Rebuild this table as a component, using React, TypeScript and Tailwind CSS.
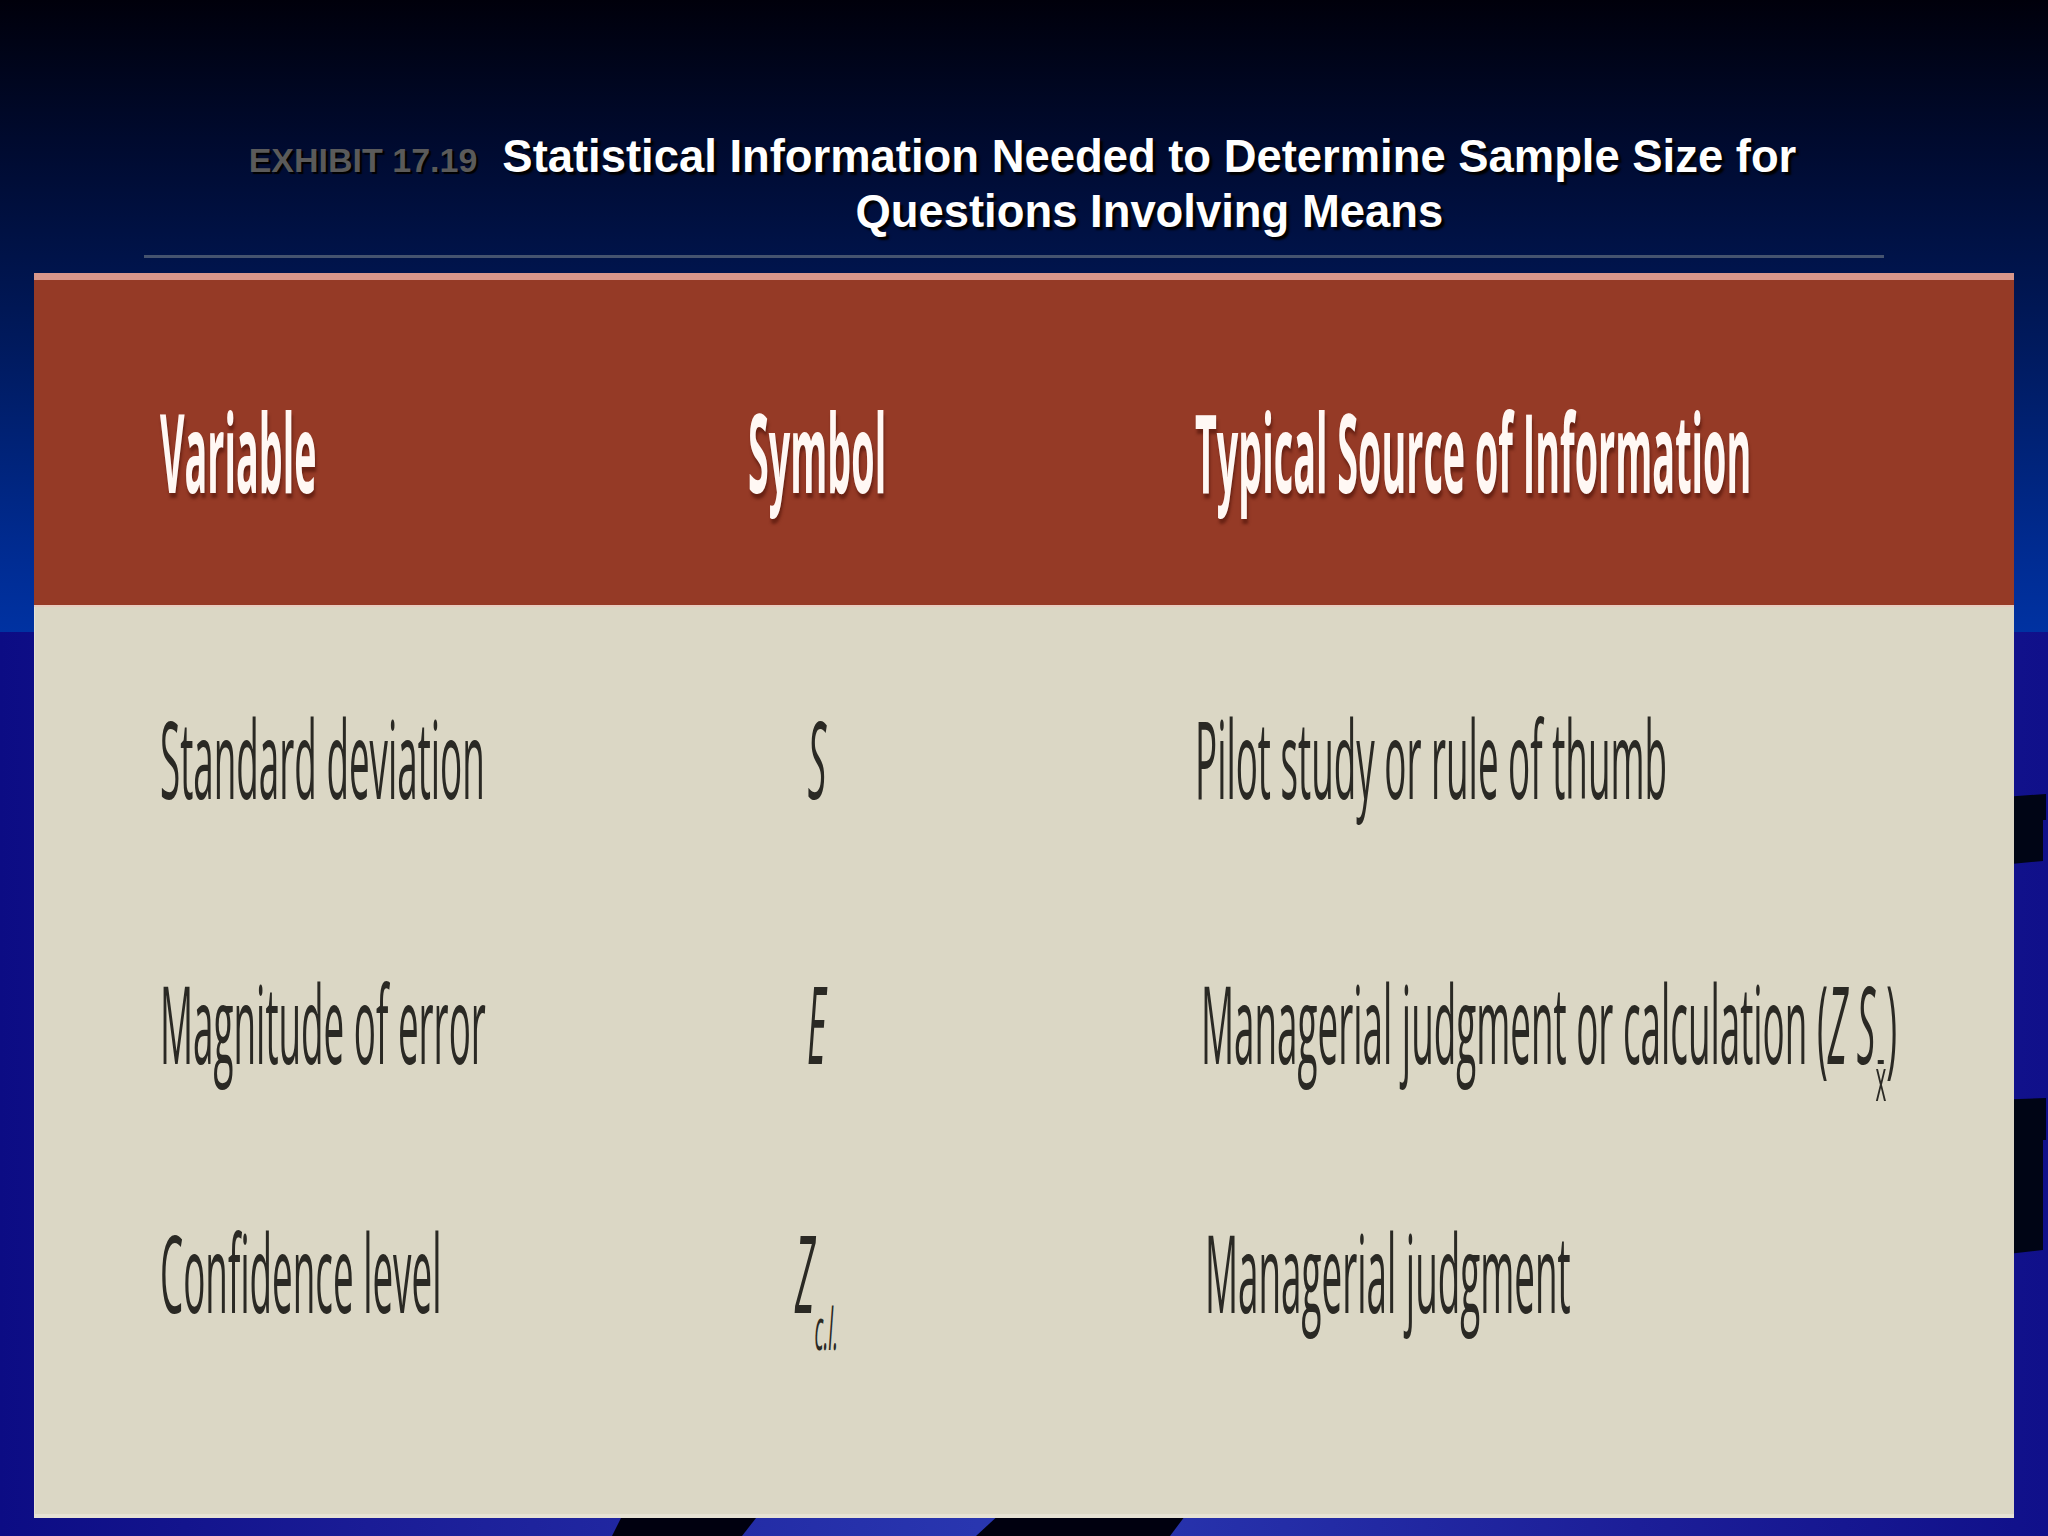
import React from "react";

// condensed, tall table lettering: a normal face squeezed on x and stretched on y
const cell = "inline-block whitespace-nowrap text-[64px] leading-none scale-x-[0.59] scale-y-[1.7]";
const bodyCell = "inline-block whitespace-nowrap text-[64px] leading-none scale-x-[0.575] scale-y-[1.7]";

function Sub({ children }: { children: React.ReactNode }) {
  return <span className="relative top-[22px] text-[34px]">{children}</span>;
}

interface Row {
  variable: string;
  symbol: React.ReactNode;
  source: React.ReactNode;
  mt: string;
  pl: string;
}

const rows: Row[] = [
  {
    variable: "Standard deviation",
    symbol: <i>S</i>,
    source: "Pilot study or rule of thumb",
    mt: "mt-[91px]",
    pl: "pl-[261px]",
  },
  {
    variable: "Magnitude of error",
    symbol: <i>E</i>,
    source: (
      <>
        Managerial judgment or calculation (<i>Z S</i>
        <span className="relative top-[22px] text-[36px]">x&#772;</span>)
      </>
    ),
    mt: "mt-[145px]",
    pl: "pl-[267px]",
  },
  {
    variable: "Confidence level",
    symbol: (
      <i>
        Z<Sub>c.l.</Sub>
      </i>
    ),
    source: "Managerial judgment",
    mt: "mt-[129px]",
    pl: "pl-[271px]",
  },
];

function Background() {
  return (
    <div className="absolute inset-0">
      <div className="h-[632px] bg-[linear-gradient(180deg,#00000b_0%,#000a2e_22%,#001a5e_55%,#002a8e_85%,#0032a2_100%)]" />
      <div className="h-[904px] bg-[linear-gradient(90deg,#0c0c84_0%,#1a1c96_18%,#2a38b2_50%,#1c1e98_80%,#10108a_100%)]" />
      <svg className="absolute inset-0" width="2048" height="1536" viewBox="0 0 2048 1536">
        <polygon points="1990,798 2046,794 2046,820 2043,820 2043,861 1990,866" fill="#000515" />
        <polygon points="1990,1100 2046,1098 2046,1140 2043,1140 2043,1250 1990,1256" fill="#000515" />
        <polygon points="630,1500 770,1500 742,1536 612,1536" fill="#00000f" />
        <polygon points="1015,1500 1197,1500 1170,1536 976,1536" fill="#00000f" />
      </svg>
    </div>
  );
}

export default function App() {
  return (
    <div className="relative w-[2048px] h-[1536px] overflow-hidden bg-[#000a2e]">
      <Background />

      <div className="relative flex flex-col">
        {/* slide title */}
        <div className="pt-[129px] flex justify-center items-baseline font-['Liberation_Sans',Arial,sans-serif] font-bold">
          <span className="text-[34px] leading-[55px] text-[#5a5a5a] [text-shadow:2px_2px_1px_#000000] mr-[22px]">
            EXHIBIT 17.19
          </span>
          <h1 className="w-[1300px] text-center text-[45.4px] leading-[55px] text-white [text-shadow:3px_3px_2px_#000000]">
            Statistical Information Needed to Determine Sample Size for
            <br />
            Questions Involving Means
          </h1>
        </div>

        <div className="mt-[16px] ml-[144px] w-[1740px] h-[3px] bg-[#45536f]" />

        {/* exhibit table */}
        <div className="mt-[15px] ml-[34px] w-[1980px] h-[1245px] flex flex-col font-['Open_Sans','Noto_Sans',sans-serif]">
          <div className="h-[7px] bg-[#d9978b]" />
          <div className="h-[327px] bg-[#953a26] border-b-2 border-[#e7cbbf]">
            <div className="h-full pt-[18px] pl-[126px] grid grid-cols-[540px_234px_1fr] items-center font-bold text-[#fff8f4] [text-shadow:2px_3px_3px_rgba(70,15,5,0.55)]">
              <div>
                <span className={`${cell} origin-left`}>Variable</span>
              </div>
              <div className="text-center">
                <span className={`${cell} origin-center`}>Symbol</span>
              </div>
              <div className="pl-[261px]">
                <span className={`${cell} origin-left`}>Typical Source of Information</span>
              </div>
            </div>
          </div>

          <div className="flex-1 bg-[#dbd7c5] border-l border-b-4 border-[#e6e2d4] pl-[125px] text-[#2a2924]">
            {rows.map((r) => (
              <div key={r.variable} className={`${r.mt} h-[120px] grid grid-cols-[540px_234px_1fr] items-center`}>
                <div>
                  <span className={`${bodyCell} origin-left`}>{r.variable}</span>
                </div>
                <div className="text-center">
                  <span className={`${bodyCell} origin-center`}>{r.symbol}</span>
                </div>
                <div className={r.pl}>
                  <span className={`${bodyCell} origin-left`}>{r.source}</span>
                </div>
              </div>
            ))}
          </div>
        </div>
      </div>
    </div>
  );
}
